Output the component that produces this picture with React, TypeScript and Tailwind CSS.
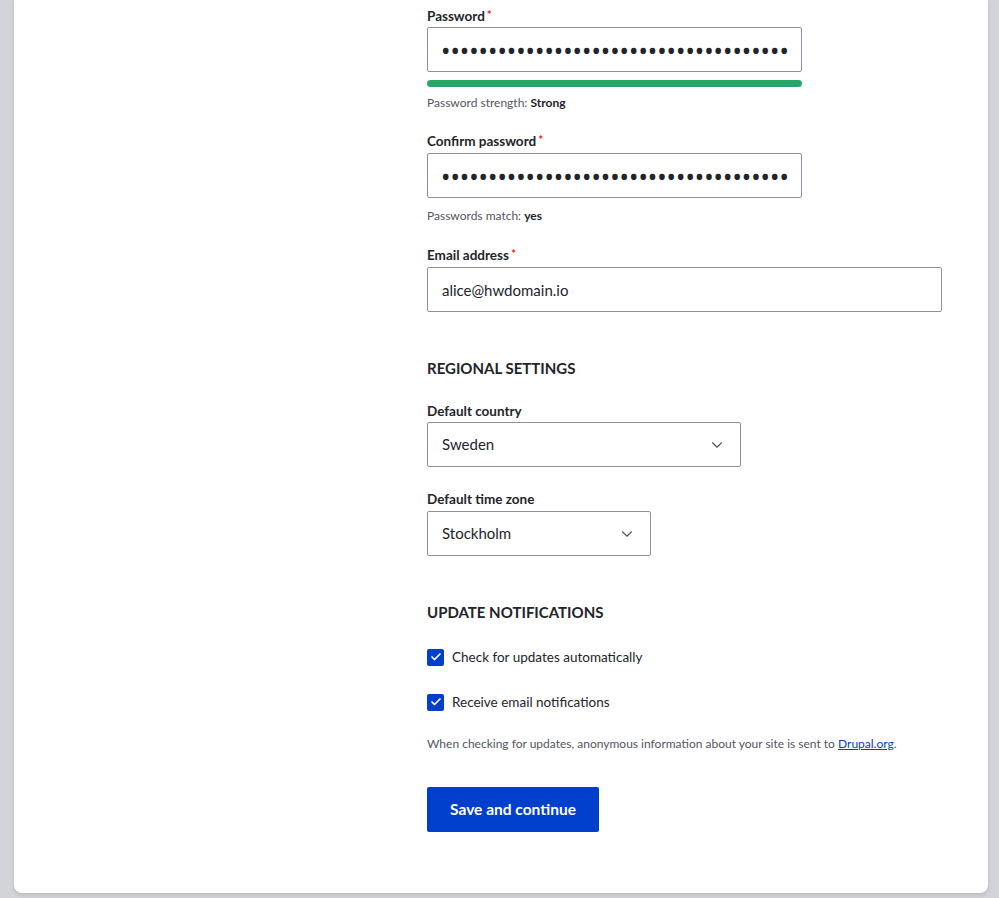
import { Check, ChevronDown } from "lucide-react";

const font = { fontFamily: 'Lato, "Noto Sans", Arial, sans-serif' };

function Label({ text, required }: { text: string; required?: boolean }) {
  return (
    <div className="h-[18px] text-[13.5px] font-bold leading-[18px] text-[#232429]">
      {text}
      {required ? <span className="relative top-[-2px] ml-[2px] text-[12px] leading-none text-[#dc2323]">*</span> : null}
    </div>
  );
}

function PasswordBox() {
  return (
    <input
      type="password"
      readOnly
      defaultValue={"x".repeat(60)}
      style={{ fontFamily: '"Noto Sans", sans-serif' }}
      className="block h-[45px] w-[375px] rounded-[2px] border border-[#8e929c] bg-white px-[13px] text-[25px] text-[#232429] outline-none"
    />
  );
}

function SelectBox({ value, width }: { value: string; width: string }) {
  return (
    <div
      className={`flex h-[45px] items-center justify-between rounded-[2px] border border-[#8e929c] bg-white pl-[14px] pr-[14px] text-[15px] text-[#232429] ${width}`}
    >
      <span>{value}</span>
      <ChevronDown className="h-[18px] w-[18px] text-[#545560]" strokeWidth={1.5} />
    </div>
  );
}

function CheckRow({ text }: { text: string }) {
  return (
    <label className="flex h-[20px] items-center gap-[8px] text-[13.5px] text-[#232429]">
      <span className="flex h-[17px] w-[17px] items-center justify-center rounded-[2px] bg-[#003ecc]">
        <Check className="h-[12px] w-[12px] text-white" strokeWidth={3.5} />
      </span>
      {text}
    </label>
  );
}

function Help({ children, className }: { children: React.ReactNode; className: string }) {
  return <div className={`h-[16px] text-[12px] leading-[16px] text-[#545560] ${className}`}>{children}</div>;
}

export default function App() {
  return (
    <div className="min-h-[898px] bg-[#d3d4d9] px-[11px] pb-[5px]" style={font}>
      <div className="ml-[3px] w-[974px] rounded-b-[8px] bg-white pb-[61px] pl-[413px] pt-[7px] shadow-[0_2px_4px_rgba(0,0,0,0.12)]">
        <Label text="Password" required />
        <div className="mt-[2px]">
          <PasswordBox />
        </div>
        <div className="mt-[8px] h-[7px] w-[375px] rounded-full bg-[#26a769]" />
        <Help className="mt-[8px]">
          Password strength: <span className="font-bold text-[#232429]">Strong</span>
        </Help>

        <div className="mt-[21px]">
          <Label text="Confirm password" required />
        </div>
        <div className="mt-[3px]">
          <PasswordBox />
        </div>
        <Help className="mt-[10px]">
          Passwords match: <span className="font-bold text-[#232429]">yes</span>
        </Help>

        <div className="mt-[22px]">
          <Label text="Email address" required />
        </div>
        <input
          readOnly
          defaultValue="alice@hwdomain.io"
          className="mt-[3px] block h-[45px] w-[515px] rounded-[2px] border border-[#8e929c] bg-white px-[14px] text-[15px] text-[#232429] outline-none"
        />

        <h2 className="mt-[46px] h-[20px] text-[15px] font-bold uppercase leading-[20px] text-[#232429]">Regional settings</h2>

        <div className="mt-[24px]">
          <Label text="Default country" />
        </div>
        <div className="mt-[2px]">
          <SelectBox value="Sweden" width="w-[314px]" />
        </div>

        <div className="mt-[23px]">
          <Label text="Default time zone" />
        </div>
        <div className="mt-[3px]">
          <SelectBox value="Stockholm" width="w-[224px]" />
        </div>

        <h2 className="mt-[46px] h-[20px] text-[15px] font-bold uppercase leading-[20px] text-[#232429]">Update notifications</h2>

        <div className="mt-[25px]">
          <CheckRow text="Check for updates automatically" />
        </div>
        <div className="mt-[25px]">
          <CheckRow text="Receive email notifications" />
        </div>

        <Help className="mt-[24px]">
          When checking for updates, anonymous information about your site is sent to{" "}
          <a href="#" className="text-[#003ecc] underline">
            Drupal.org
          </a>
          .
        </Help>

        <button className="mt-[35px] block h-[45px] w-[172px] rounded-[2px] bg-[#003ecc] text-[15.5px] font-bold text-white">
          Save and continue
        </button>
      </div>
    </div>
  );
}
